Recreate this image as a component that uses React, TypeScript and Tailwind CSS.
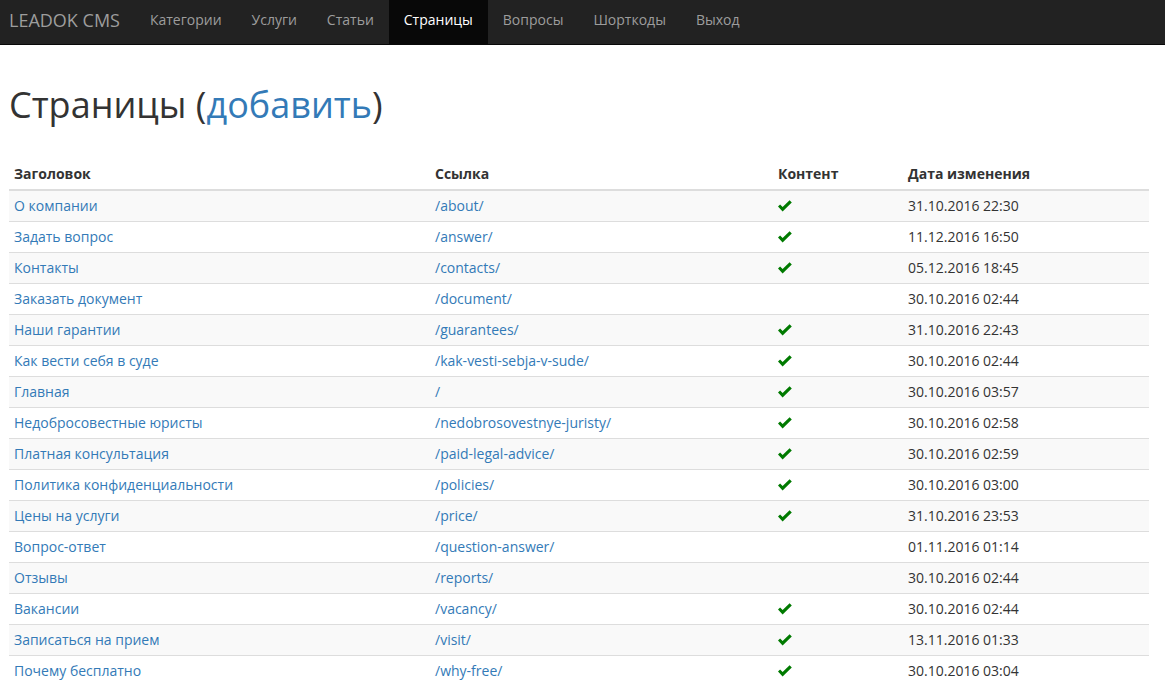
import React from "react";

const rows: [string, string, boolean, string][] = [
  ["О компании", "/about/", true, "31.10.2016 22:30"],
  ["Задать вопрос", "/answer/", true, "11.12.2016 16:50"],
  ["Контакты", "/contacts/", true, "05.12.2016 18:45"],
  ["Заказать документ", "/document/", false, "30.10.2016 02:44"],
  ["Наши гарантии", "/guarantees/", true, "31.10.2016 22:43"],
  ["Как вести себя в суде", "/kak-vesti-sebja-v-sude/", true, "30.10.2016 02:44"],
  ["Главная", "/", true, "30.10.2016 03:57"],
  ["Недобросовестные юристы", "/nedobrosovestnye-juristy/", true, "30.10.2016 02:58"],
  ["Платная консультация", "/paid-legal-advice/", true, "30.10.2016 02:59"],
  ["Политика конфиденциальности", "/policies/", true, "30.10.2016 03:00"],
  ["Цены на услуги", "/price/", true, "31.10.2016 23:53"],
  ["Вопрос-ответ", "/question-answer/", false, "01.11.2016 01:14"],
  ["Отзывы", "/reports/", false, "30.10.2016 02:44"],
  ["Вакансии", "/vacancy/", true, "30.10.2016 02:44"],
  ["Записаться на прием", "/visit/", true, "13.11.2016 01:33"],
  ["Почему бесплатно", "/why-free/", true, "30.10.2016 03:04"],
];

const navItems = ["Категории", "Услуги", "Статьи", "Страницы", "Вопросы", "Шорткоды", "Выход"];

function Check() {
  return (
    <svg width="14" height="12" viewBox="0 0 14 12" className="block mt-[1px]">
      <path d="M0 6.6 L2.1 4.6 L4.6 7.1 L11.6 0.2 L13.8 2.4 L4.6 11.5 Z" fill="#007a00" />
    </svg>
  );
}

export default function App() {
  return (
    <div className="bg-white text-[#333] text-[14px] leading-[20px] min-h-[696px]" style={{ fontFamily: '"Open Sans", "Noto Sans", sans-serif' }}>
      <nav className="bg-[#222] border-b border-[#080808] h-[45px] flex">
        <div className="pl-[9px] pr-[15px] pt-[10px] text-[18px] leading-[20px] text-[#9d9d9d]">LEADOK CMS</div>
        {navItems.map((n) => (
          <div
            key={n}
            className={
              n === "Страницы"
                ? "px-[15px] pt-[10px] h-[44px] bg-[#080808] text-white"
                : "px-[15px] pt-[10px] h-[44px] text-[#9d9d9d]"
            }
          >
            {n}
          </div>
        ))}
      </nav>
      <div className="pl-[9px] pr-[16px]">
        <h1 className="mt-[40px] mb-[34px] text-[36px] leading-[39.6px] font-normal">
          Страницы (<span className="text-[#337ab7]">добавить</span>)
        </h1>
        <table className="w-[1140px] table-fixed border-collapse">
          <colgroup>
            <col className="w-[421px]" />
            <col className="w-[343px]" />
            <col className="w-[130px]" />
            <col className="w-[246px]" />
          </colgroup>
          <thead>
            <tr>
              {["Заголовок", "Ссылка", "Контент", "Дата изменения"].map((h) => (
                <th key={h} className="text-left font-bold p-[5px] border-b-2 border-[#ddd]">
                  {h}
                </th>
              ))}
            </tr>
          </thead>
          <tbody>
            {rows.map((r, i) => (
              <tr key={r[1]} className={i % 2 === 0 ? "bg-[#f9f9f9]" : "bg-white"}>
                <td className="p-[5px] border-t border-[#ddd] text-[#337ab7]">{r[0]}</td>
                <td className="p-[5px] border-t border-[#ddd] text-[#337ab7]">{r[1]}</td>
                <td className="p-[5px] border-t border-[#ddd]">{r[2] ? <Check /> : null}</td>
                <td className="p-[5px] border-t border-[#ddd]">{r[3]}</td>
              </tr>
            ))}
          </tbody>
        </table>
      </div>
    </div>
  );
}
